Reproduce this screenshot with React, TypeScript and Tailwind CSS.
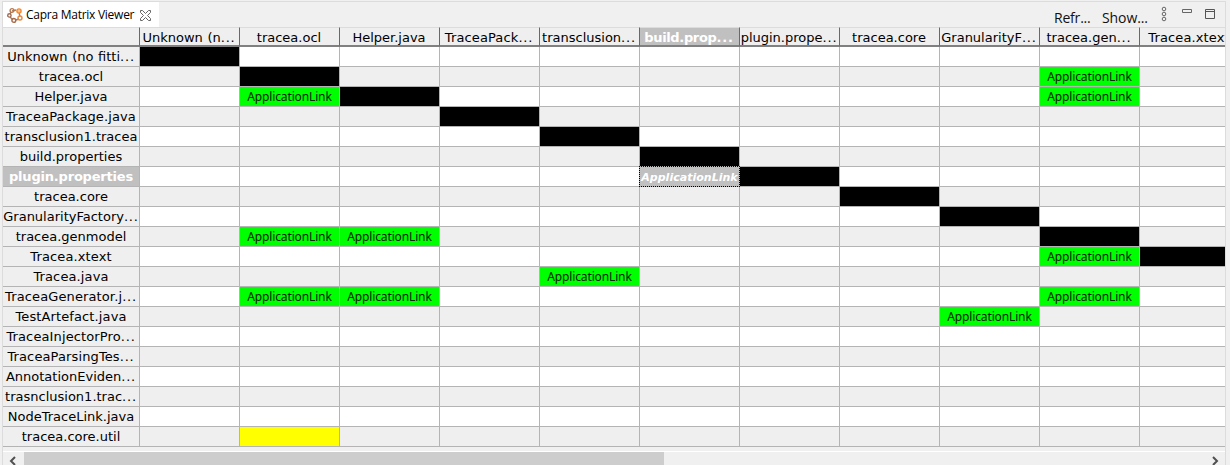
const columns = ["Unknown (n...", "tracea.ocl", "Helper.java", "TraceaPack...", "transclusion...", "build.prop...", "plugin.prope...", "tracea.core", "GranularityF...", "tracea.gen...", "Tracea.xtext"];

type Row = { name: string; links?: number[]; self?: number; selected?: number; warn?: number };

const rows: Row[] = [
  { name: "Unknown (no fitti...", self: 0 },
  { name: "tracea.ocl", self: 1, links: [9] },
  { name: "Helper.java", self: 2, links: [1, 9] },
  { name: "TraceaPackage.java", self: 3 },
  { name: "transclusion1.tracea", self: 4 },
  { name: "build.properties", self: 5 },
  { name: "plugin.properties", self: 6, selected: 5 },
  { name: "tracea.core", self: 7 },
  { name: "GranularityFactory...", self: 8 },
  { name: "tracea.genmodel", self: 9, links: [1, 2] },
  { name: "Tracea.xtext", self: 10, links: [9] },
  { name: "Tracea.java", links: [4] },
  { name: "TraceaGenerator.j...", links: [1, 2, 9] },
  { name: "TestArtefact.java", links: [8] },
  { name: "TraceaInjectorPro..." },
  { name: "TraceaParsingTes..." },
  { name: "AnnotationEviden..." },
  { name: "trasnclusion1.trac..." },
  { name: "NodeTraceLink.java" },
  { name: "tracea.core.util", warn: 1 },
];

function Label({ text }: { text: string }) {
  const tracking = text.startsWith("Tra") || text.startsWith("Tes") ? "tracking-[0.12px]" : "";
  if (!text.endsWith("...")) return <span className={tracking}>{text}</span>;
  return (
    <span className={"[word-spacing:0.5px] " + tracking}>
      {text.slice(0, -3)}
      <span className="tracking-[0.8px]">...</span>
    </span>
  );
}

function Cell({ row, col, odd }: { row: Row; col: number; odd: boolean }) {
  const base = "flex h-5 w-[100px] shrink-0 items-center justify-center border-r border-b border-[#b4b4b4] whitespace-nowrap ";
  if (row.self === col) return <div className={base + "bg-black"} />;
  if (row.warn === col) return <div className={base + "bg-[#ffff00]"} />;
  if (row.selected === col)
    return (
      <div className={base + "relative bg-[#c0c0c0] pt-[2px] font-['DejaVu_Sans'] text-[11px] font-bold italic leading-none text-white"}>
        <span className="absolute -top-px -left-px h-[21px] w-[101px] border border-dotted border-black" />
        <span className="tracking-[0.02px]">ApplicationLink</span>
      </div>
    );
  if (row.links?.includes(col))
    return <div className={base + "bg-[#00ff00] font-['Noto_Sans'] text-[12px] leading-none tracking-[-0.14px] text-[#062006]"}>ApplicationLink</div>;
  return <div className={base + (odd ? "bg-[#efefef]" : "bg-white")} />;
}

function CapraIcon() {
  return (
    <svg width="16" height="16" viewBox="0 0 16 16" fill="none" strokeWidth="1.4">
      <path d="M5 4 9 3M12 5l1 5M4 5 3 7M3 10l3 3M9 13l3-1" stroke="#a87858" />
      <circle cx="5" cy="3.5" r="1.9" stroke="#b77850" />
      <circle cx="12" cy="4" r="2.1" stroke="#f28a32" fill="#f9c28c" />
      <circle cx="2.4" cy="8.4" r="1.7" stroke="#9c6b55" />
      <circle cx="13" cy="11" r="2" stroke="#e58a40" />
      <circle cx="6.8" cy="13.4" r="1.9" stroke="#a96b48" />
    </svg>
  );
}

export default function App() {
  return (
    <div className="flex h-[465px] w-[1230px] flex-col overflow-hidden bg-[#f0f0f0] pt-px pl-[2px] font-['DejaVu_Sans',sans-serif] text-black">
      <div className="flex h-[464px] w-[1224px] flex-col border-x border-t border-[#dcdcdc]">
        <div className="flex h-[25px] shrink-0 justify-between">
          <div className="flex w-[156px] items-center bg-white pl-1 font-['Open_Sans'] text-[12px]">
            <CapraIcon />
            <span className="ml-[3px] w-[108px] whitespace-nowrap tracking-[-0.26px]">Capra Matrix Viewer</span>
            <svg className="mt-px ml-[6px] shrink-0" width="11" height="11" viewBox="0 0 11 11" fill="none" stroke="#666">
              <path d="M.5.5h2l3 3 3-3h2v2l-3 3 3 3v2h-2l-3-3-3 3h-2v-2l3-3-3-3z" />
            </svg>
          </div>
          <div className="flex pr-[10px] font-['Open_Sans'] text-[14px] text-[#111]">
            <span className="mt-[5px] w-[48px] tracking-[-0.2px]">Refr...</span>
            <span className="mt-[5px] w-[59px] tracking-[-0.1px]">Show...</span>
            <svg className="mt-1" width="6" height="16" viewBox="0 0 6 16" fill="none" stroke="#666">
              <circle cx="3" cy="3" r="1.8" /><circle cx="3" cy="8" r="1.8" /><circle cx="3" cy="13" r="1.8" />
            </svg>
            <svg className="mt-[7px] ml-[15px]" width="10" height="4" fill="none" stroke="#666"><path d="M.5.5h9v3h-9z" /></svg>
            <svg className="mt-[7px] ml-[13px]" width="10" height="10" fill="none" stroke="#555"><path d="M.5.5h9v9h-9zM0 2.5h10" /></svg>
          </div>
        </div>
        <div className="flex w-[1222px] flex-col overflow-hidden">
          <div className="flex h-5 text-[13px] leading-none">
            <div className="w-[137px] shrink-0 border-t border-r border-b-2 border-t-[#dcdcdc] border-r-[#696969] border-b-[#808080] bg-[#efefef]" />
            {columns.map((name, i) => (
              <div key={name} className={"flex w-[100px] shrink-0 items-center justify-center border-t border-r border-b-2 border-t-[#dcdcdc] border-r-[#696969] border-b-[#808080] pt-px pr-px whitespace-nowrap " + (i === 5 ? "bg-[#c0c0c0] font-bold tracking-[-0.35px] text-white" : "bg-[#efefef]")}>
                <Label text={name} />
              </div>
            ))}
          </div>
          {rows.map((row, i) => (
            <div key={row.name} className="flex h-5">
              <div className={"flex w-[137px] shrink-0 items-center justify-center border-r border-b border-[#b4b4b4] text-[13px] leading-none whitespace-nowrap " + (i === 6 ? "bg-[#c0c0c0] font-bold text-white" : "bg-[#efefef]")}>
                {i === 6 ? <span className="tracking-[-0.2px]">{row.name}</span> : <Label text={row.name} />}
              </div>
              {columns.map((name, c) => <Cell key={name} row={row} col={c} odd={i % 2 === 1} />)}
            </div>
          ))}
        </div>
        <div className="mt-1 flex h-[14px] shrink-0 border-t border-white">
          <svg width="21" height="14" fill="none" stroke="#505050" strokeWidth="2"><path d="m12 5-4 4 4 4" /></svg>
          <div className="h-[14px] w-[640px] bg-[#cdcdcd]" />
          <svg className="ml-auto" width="21" height="14" fill="none" stroke="#505050" strokeWidth="2"><path d="m9 5 4 4-4 4" /></svg>
        </div>
      </div>
    </div>
  );
}
